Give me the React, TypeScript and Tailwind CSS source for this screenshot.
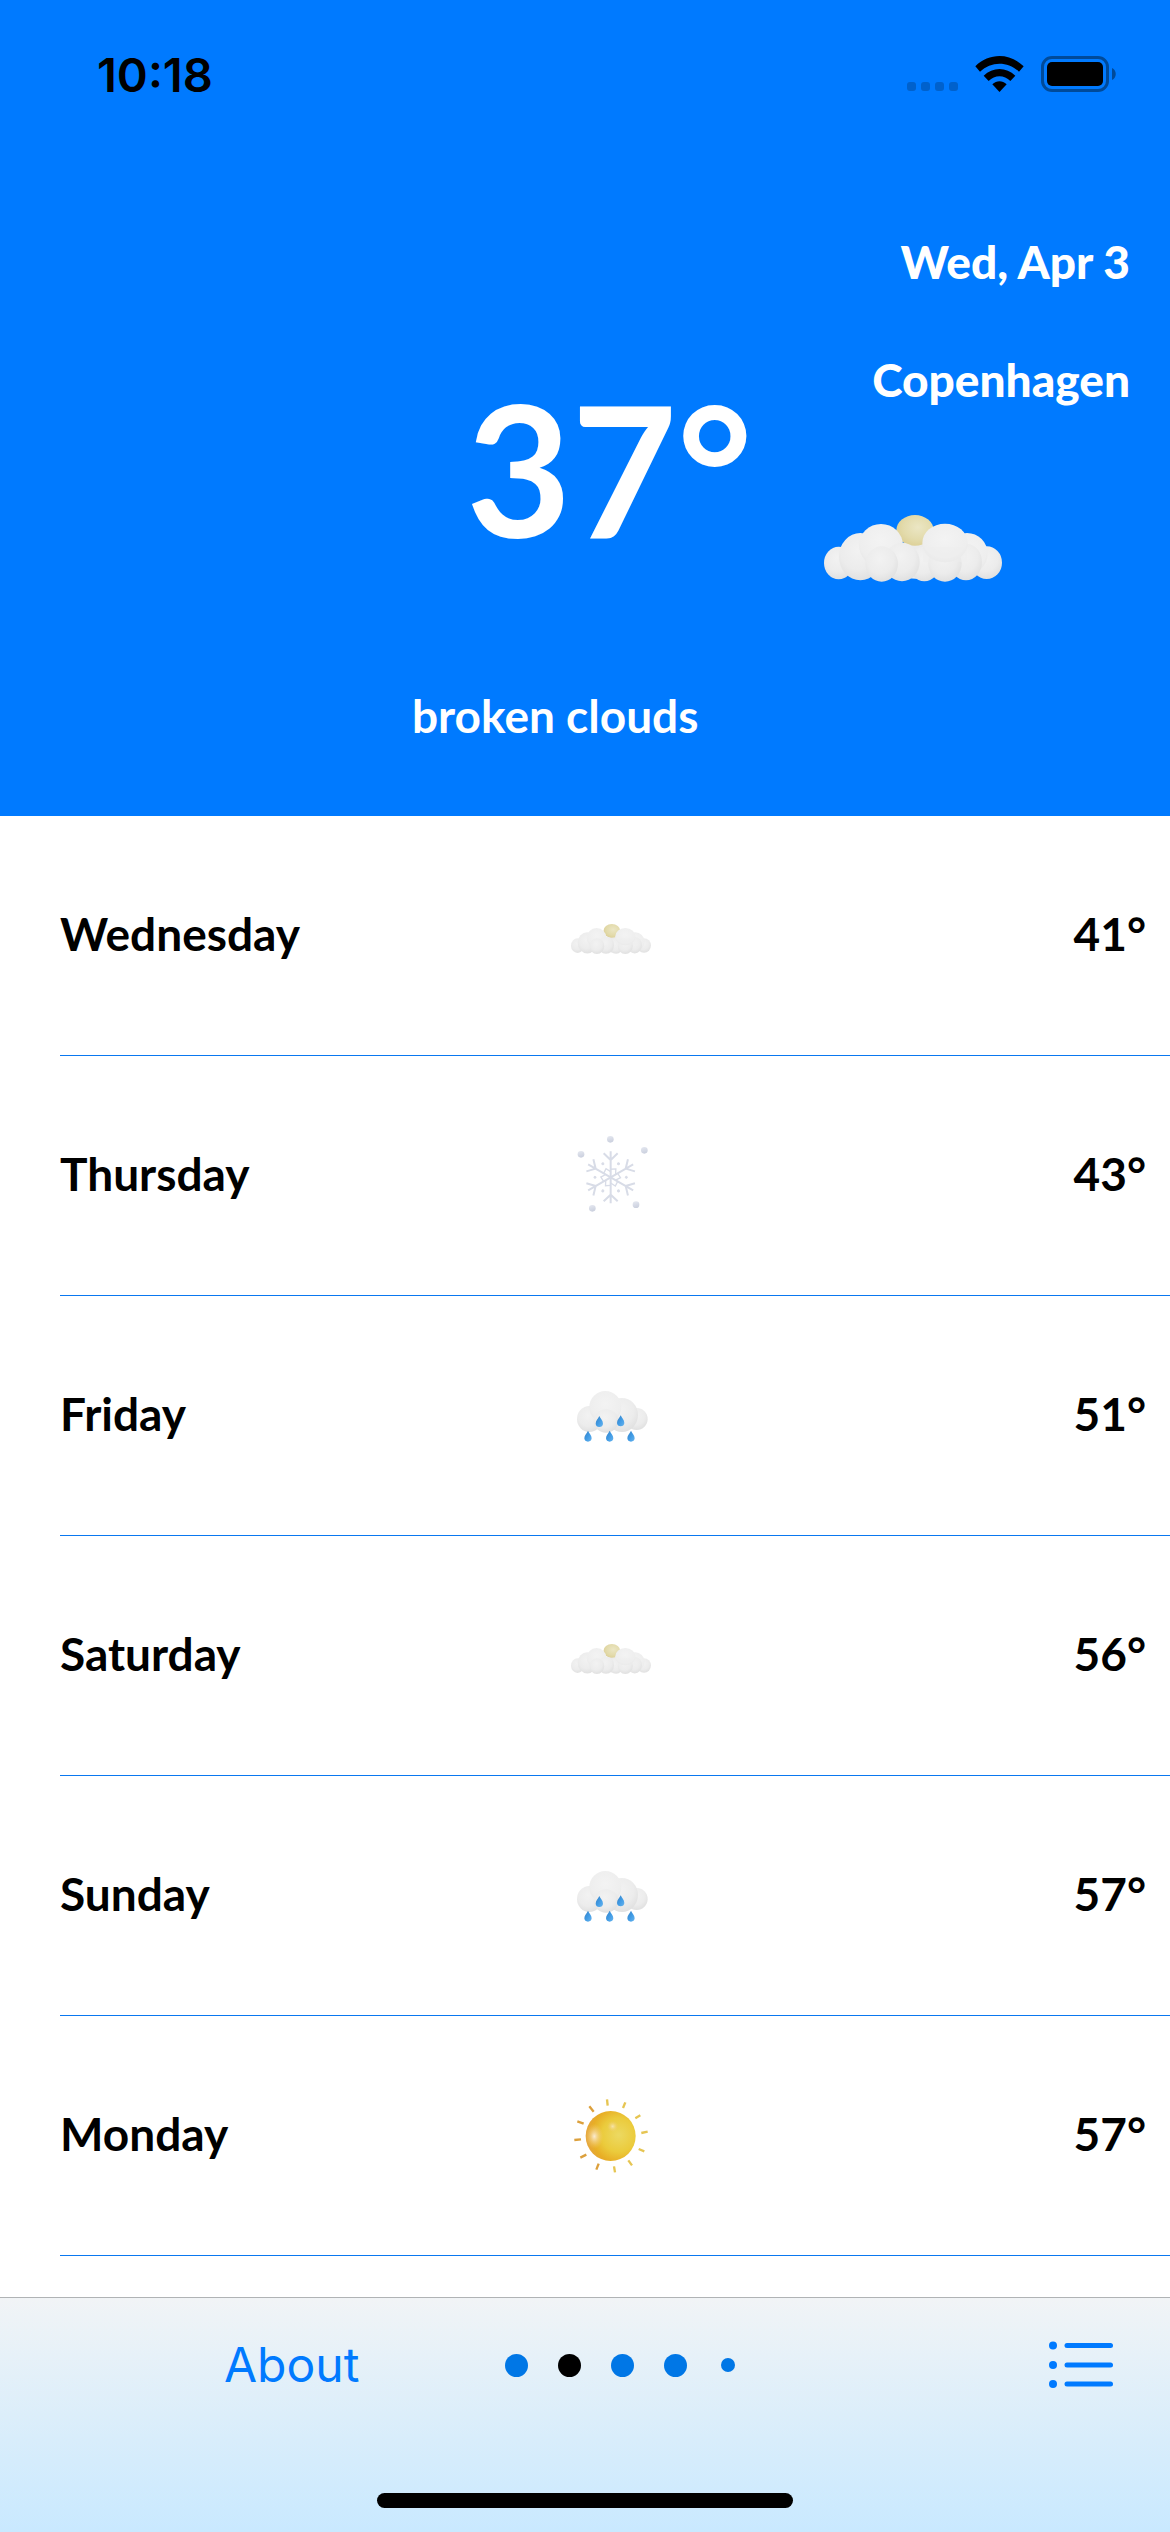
import React from "react";

type Condition = "clouds" | "snow" | "rain" | "sun";

const forecast: { day: string; condition: Condition; label: string; temp: number }[] = [
  { day: "Wednesday", condition: "clouds", label: "Broken clouds", temp: 41 },
  { day: "Thursday", condition: "snow", label: "Snow", temp: 43 },
  { day: "Friday", condition: "rain", label: "Rain", temp: 51 },
  { day: "Saturday", condition: "clouds", label: "Broken clouds", temp: 56 },
  { day: "Sunday", condition: "rain", label: "Rain", temp: 57 },
  { day: "Monday", condition: "sun", label: "Clear", temp: 57 },
];

function Gradients() {
  return (
    <svg width="0" height="0" className="absolute" aria-hidden="true">
      <defs>
        <radialGradient id="puff" cx="0.45" cy="0.35" r="0.7">
          <stop offset="0" stopColor="#f2f2f2" />
          <stop offset="0.6" stopColor="#ececec" />
          <stop offset="1" stopColor="#dedede" />
        </radialGradient>
        <radialGradient id="puffTop" cx="0.5" cy="0.4" r="0.6">
          <stop offset="0" stopColor="#f3f3f3" />
          <stop offset="0.8" stopColor="#eeeeee" />
          <stop offset="1" stopColor="#e8e8e8" />
        </radialGradient>
        <radialGradient id="paleSun" cx="0.58" cy="0.4" r="0.65">
          <stop offset="0" stopColor="#ebe6c4" />
          <stop offset="0.6" stopColor="#e3dbac" />
          <stop offset="1" stopColor="#dccf95" />
        </radialGradient>
        <linearGradient id="drop" x1="0" y1="0" x2="1" y2="1">
          <stop offset="0" stopColor="#3a7fc0" />
          <stop offset="0.5" stopColor="#3f9ae4" />
          <stop offset="1" stopColor="#68b4ee" />
        </linearGradient>
        <radialGradient id="sunBody" cx="0.66" cy="0.48" r="0.68">
          <stop offset="0" stopColor="#ecd962" />
          <stop offset="0.5" stopColor="#ebcb3c" />
          <stop offset="0.8" stopColor="#e8ae25" />
          <stop offset="1" stopColor="#e3a340" />
        </radialGradient>
        <radialGradient id="sunGlow">
          <stop offset="0" stopColor="#fbeedb" stopOpacity="0.95" />
          <stop offset="1" stopColor="#f3c97a" stopOpacity="0" />
        </radialGradient>
        <linearGradient id="ball" x1="0" y1="0" x2="0.3" y2="1">
          <stop offset="0" stopColor="#e6e9f1" />
          <stop offset="1" stopColor="#ccd1df" />
        </linearGradient>
      </defs>
    </svg>
  );
}

function CloudShapes() {
  return (
    <>
      <ellipse cx="345" cy="205" rx="60" ry="60" fill="#ebebeb" />
      <ellipse cx="342" cy="120" rx="56" ry="46" fill="url(#paleSun)" />
      <ellipse cx="113" cy="218" rx="44" ry="49" fill="url(#puff)" />
      <ellipse cx="557" cy="217" rx="46" ry="49" fill="url(#puff)" />
      <ellipse cx="370" cy="221" rx="46" ry="52" fill="url(#puff)" />
      <ellipse cx="498" cy="190" rx="62" ry="62" fill="url(#puffTop)" />
      <ellipse cx="495" cy="215" rx="48" ry="55" fill="url(#puff)" />
      <ellipse cx="178" cy="199" rx="64" ry="71" fill="url(#puff)" />
      <ellipse cx="432" cy="220" rx="50" ry="54" fill="url(#puff)" />
      <ellipse cx="432" cy="158" rx="68" ry="58" fill="url(#puffTop)" />
      <path d="M366 170h132v45H366z" fill="#ededed" opacity="0.45" />
      <ellipse cx="240" cy="165" rx="66" ry="64" fill="url(#puffTop)" />
      <ellipse cx="303" cy="215" rx="53" ry="58" fill="url(#puff)" />
      <ellipse cx="242" cy="221" rx="49" ry="53" fill="url(#puff)" />
    </>
  );
}

const drops = [
  [178, 182],
  [242, 180],
  [144, 226],
  [209, 226],
  [273, 226],
];

const rays = [
  [201, 85, 203, 104],
  [256, 94, 249, 111],
  [301, 133, 286, 142],
  [323, 182, 304, 186],
  [313, 241, 296, 234],
  [276, 283, 265, 268],
  [225, 304, 222, 286],
  [169, 296, 176, 278],
  [121, 260, 139, 251],
  [103, 207, 123, 205],
  [112, 151, 131, 158],
  [148, 106, 161, 122],
];

function WeatherIcon({ condition, label }: { condition: Condition; label: string }) {
  if (condition === "clouds") {
    return (
      <svg viewBox="93 15 240 240" className="size-20" role="img" aria-label={label}>
        <g transform="translate(62 66) scale(0.449)">
          <CloudShapes />
        </g>
      </svg>
    );
  }
  if (condition === "snow") {
    return (
      <svg viewBox="93 75 240 240" className="size-20 overflow-visible" role="img" aria-label={label}>
        {[
          [211, 85],
          [123, 130],
          [313, 118],
          [157, 292],
          [288, 281],
        ].map(([x, y]) => (
          <circle key={x} cx={x} cy={y} r="10" fill="url(#ball)" />
        ))}
        {[0, 60, 120, 180, 240, 300].map((a) => (
          <g key={a} transform={`rotate(${a} 212 199)`} stroke="#d8dce7" strokeWidth="6" fill="none">
            <path d="M212 199V121M191 127l21 20l21-20" />
            <path d="M212 182l-14-9l-7 14" strokeWidth="4" />
            <circle cx="259" cy="199" r="3" strokeWidth="3" fill="#d8dce7" />
          </g>
        ))}
      </svg>
    );
  }
  if (condition === "rain") {
    return (
      <svg viewBox="93 45 240 240" className="size-20" role="img" aria-label={label}>
        <circle cx="290" cy="174" r="33" fill="url(#puff)" />
        <ellipse cx="148" cy="174" rx="37" ry="39" fill="url(#puff)" />
        <ellipse cx="246" cy="162" rx="48" ry="51" fill="url(#puff)" />
        <circle cx="196" cy="138" r="48" fill="url(#puffTop)" />
        <ellipse cx="198" cy="180" rx="37" ry="35" fill="url(#puff)" />
        {drops.map(([x, y]) => (
          <path
            key={`${x}-${y}`}
            transform={`translate(${x} ${y})`}
            d="M0-17C4-9 11-3 11 6C11 12 6 16 0 16S-11 12-11 6C-11-3-4-9 0-17Z"
            fill="url(#drop)"
          />
        ))}
      </svg>
    );
  }
  return (
    <svg viewBox="93 75 240 240" className="size-20" role="img" aria-label={label}>
      {rays.map(([x1, y1, x2, y2]) => (
        <line
          key={`${x1}-${y1}`}
          x1={x1}
          y1={y1}
          x2={x2}
          y2={y2}
          stroke={x1 < 190 ? "#dca03c" : "#e6c552"}
          strokeWidth="7"
        />
      ))}
      <circle cx="212" cy="195" r="75" fill="url(#sunBody)" />
      <ellipse cx="163" cy="196" rx="27" ry="38" fill="url(#sunGlow)" />
      <circle cx="218" cy="166" r="17" fill="url(#sunGlow)" opacity="0.7" />
    </svg>
  );
}

function StatusBar() {
  return (
    <div className="flex h-[148px] items-center justify-between pr-[54px] pl-[97px] text-black">
      <time className="font-[Inter,sans-serif] text-[47px] leading-none font-semibold">10:18</time>
      <div className="flex items-center gap-[17px]">
        <svg width="51" height="36" viewBox="0 0 51 36" fill="#0061cc" aria-hidden="true">
          <rect x="0" y="26" width="9" height="9" rx="3" />
          <rect x="14" y="26" width="9" height="9" rx="3" />
          <rect x="28" y="26" width="9" height="9" rx="3" />
          <rect x="42" y="26" width="9" height="9" rx="3" />
        </svg>
        <svg width="49" height="36" viewBox="0 0 145 108" aria-label="Wi-Fi" role="img">
          <path d="M0 31C41-10 104-10 145 31L131 47C98 15 47 15 14 47Z" />
          <path d="M25 59C52 32 93 32 120 59L105 75C87 56 58 56 40 75Z" />
          <path d="M51 85C64 73 81 73 94 85L72.500 108Z" />
        </svg>
        <svg width="75" height="36" viewBox="0 0 75 36" aria-label="Battery full" role="img">
          <rect x="1.500" y="1.500" width="65" height="33" rx="9.500" fill="none" stroke="#004a99" strokeWidth="3" />
          <rect x="6" y="6" width="56" height="24" rx="5" />
          <path d="M71 12C76 14 76 22 71 24Z" fill="#004a99" />
        </svg>
      </div>
    </div>
  );
}

export default function App() {
  return (
    <div className="flex min-h-screen flex-col bg-white font-[Lato,sans-serif] text-black">
      <Gradients />
      <header className="bg-[#007aff] pb-[72px] text-white">
        <StatusBar />
        <div className="grid grid-cols-[65%_35%]">
          <div className="flex flex-col pt-[204px]">
            <h1 className="pl-[466px] text-[182px] leading-[232px] font-bold">37°</h1>
            <p className="mt-[104px] pl-[412px] text-[46px] leading-[56px] font-bold">broken clouds</p>
          </div>
          <div className="flex flex-col items-end pt-[86px] pr-10">
            <p className="text-[46px] leading-[56px] font-black">Wed, Apr 3</p>
            <h2 className="mt-[62px] text-[46px] leading-[56px] font-black">Copenhagen</h2>
            <svg
              viewBox="69 74 534 201"
              className="mt-[107px] mr-[128px] h-[67px] w-[178px]"
              role="img"
              aria-label="Broken clouds"
            >
              <CloudShapes />
            </svg>
          </div>
        </div>
      </header>

      <main className="flex-1">
        <ul>
          {forecast.map((f) => (
            <li
              key={f.day}
              className="ml-15 grid h-60 grid-cols-[1fr_80px_1fr] items-center border-b border-[#0a78f0] pr-2 text-[46px] leading-[56px] font-bold"
            >
              <span className="pb-1">{f.day}</span>
              <WeatherIcon condition={f.condition} label={f.label} />
              <span className="pr-4 pb-1 text-right">{f.temp}°</span>
            </li>
          ))}
        </ul>
      </main>

      <footer className="border-t border-[#b0b3b5] bg-linear-to-b from-[#f1f4f6] via-[#dceefa] to-[#c9e9ff]">
        <div className="flex h-[134px] items-center pr-[57px] pl-56">
          <button type="button" className="w-[281px] text-left font-[Inter,sans-serif] text-[48px] leading-[56px] text-[#007aff]">
            About
          </button>
          <nav aria-label="Cities" className="flex flex-1 items-center gap-[30px]">
            <button type="button" aria-label="City 1" className="size-[23px] rounded-full bg-[#0077e6]" />
            <button type="button" aria-label="City 2" aria-current="page" className="size-[23px] rounded-full bg-black" />
            <button type="button" aria-label="City 3" className="size-[23px] rounded-full bg-[#0077e6]" />
            <button type="button" aria-label="City 4" className="size-[23px] rounded-full bg-[#0077e6]" />
            <button type="button" aria-label="City 5" className="ml-1 size-[14px] rounded-full bg-[#0077e6]" />
          </nav>
          <button type="button" aria-label="City list">
            <svg width="64" height="48" viewBox="0 0 64 48" fill="#007aff" aria-hidden="true">
              <circle cx="4" cy="4.500" r="4" />
              <circle cx="4" cy="24" r="4" />
              <circle cx="4" cy="43" r="4" />
              <rect x="15.500" y="2" width="48.500" height="5" rx="2.500" />
              <rect x="15.500" y="21.500" width="48.500" height="5" rx="2.500" />
              <rect x="15.500" y="40.500" width="48.500" height="5" rx="2.500" />
            </svg>
          </button>
        </div>
        <div className="mx-auto mt-[61px] mb-6 h-[15px] w-[416px] rounded-full bg-black" />
      </footer>
    </div>
  );
}
